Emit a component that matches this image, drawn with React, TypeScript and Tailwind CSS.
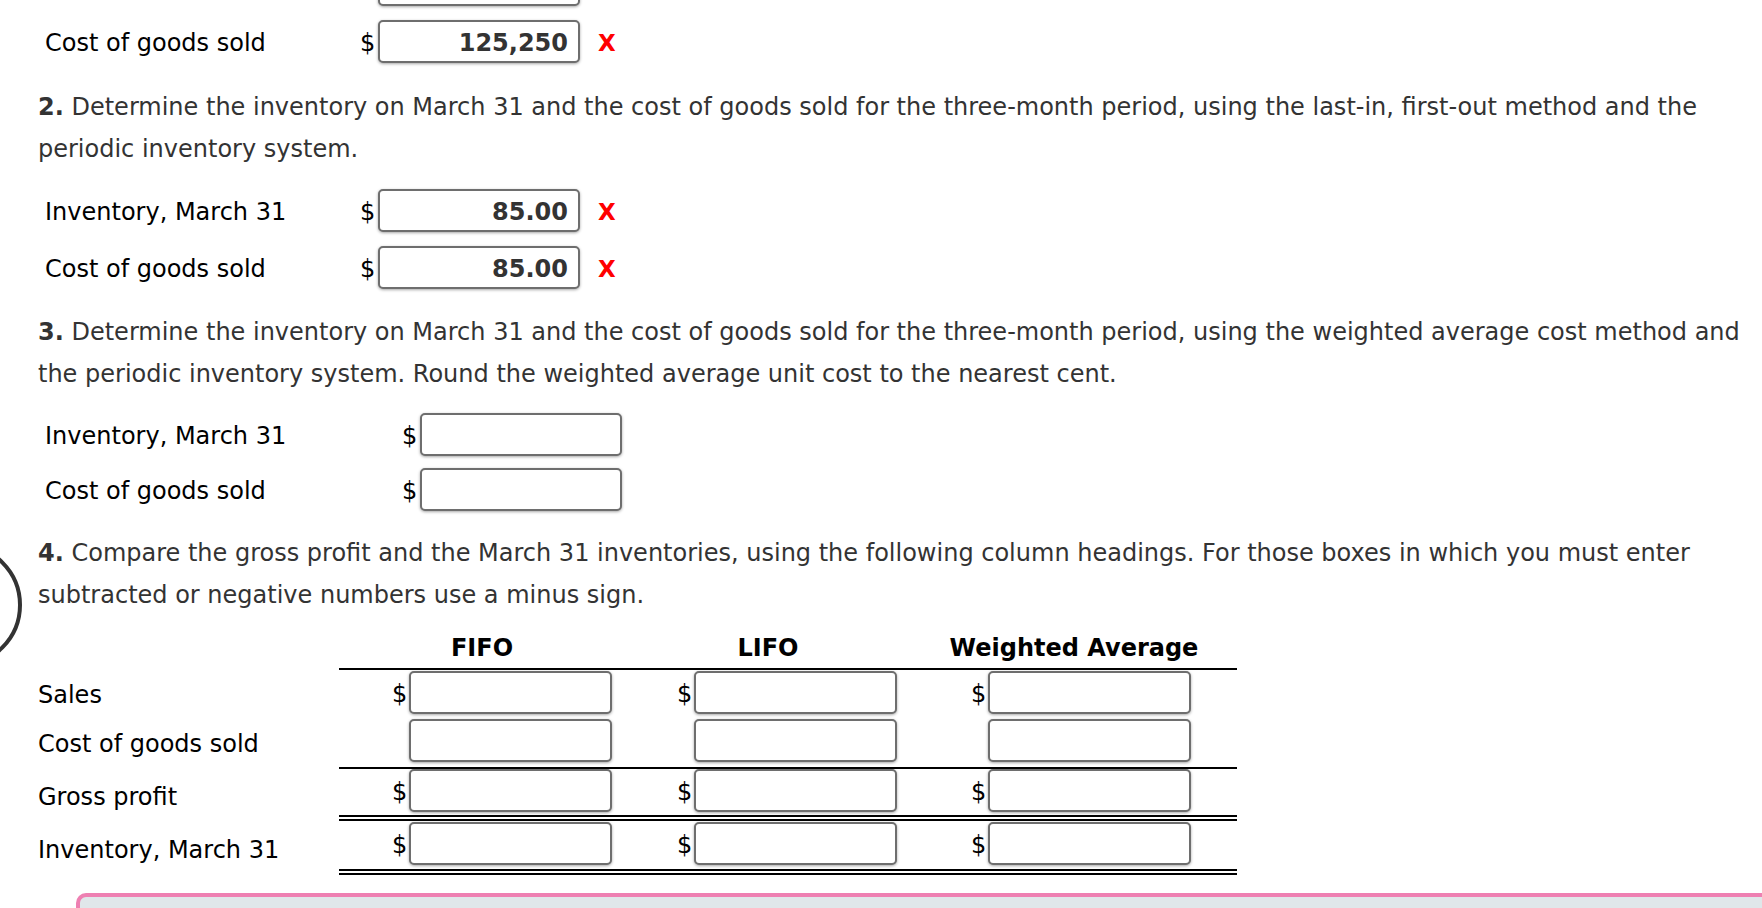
import React from 'react';

const font = { fontFamily: '"DejaVu Sans", Verdana, sans-serif' };

interface BoxProps {
  value?: string;
}

const AnswerBox = ({ value }: BoxProps) => (
  <div className="w-[202px] h-[43px] border-2 border-[#6e6e6e] rounded-[5px] bg-white shadow-[0_1px_3px_rgba(0,0,0,0.35)] flex items-center justify-end pr-[10px]">
    {value && <span className="text-[24px] font-bold text-[#333] pt-[2px]">{value}</span>}
  </div>
);

interface RowProps {
  label: string;
  value?: string;
  wrong?: boolean;
  labelWidth: string;
  className?: string;
}

const AnswerRow = ({ label, value, wrong, labelWidth, className }: RowProps) => (
  <div className={`flex items-center h-[43px] pl-[45px] ${className ?? ''}`}>
    <div className={`${labelWidth} text-[24px] text-black whitespace-nowrap pt-[3px]`}>{label}</div>
    <div className="w-[18px] text-[24px] text-black pt-[2px]">$</div>
    <AnswerBox value={value} />
    {wrong && <span className="ml-[18px] text-[23px] font-bold text-[#f00] pt-[3px]">X</span>}
  </div>
);

const Para = ({ num, lines, className }: { num: string; lines: string[]; className?: string }) => (
  <p className={`pl-[38px] text-[24px] leading-[42px] text-[#333] whitespace-nowrap ${className ?? ''}`}>
    <span className="font-bold">{num}</span>
    {lines.map((l, i) => (
      <React.Fragment key={i}>
        {i > 0 && <br />}
        {l}
      </React.Fragment>
    ))}
  </p>
);

const Cell = ({ dollar, width, pr }: { dollar: boolean; width: string; pr: string }) => (
  <div className={`${width} ${pr} flex justify-end items-start`}>
    <span className="w-[17px] text-[24px] text-black leading-[43px] pt-[2px]">{dollar ? '$' : ''}</span>
    <div className="w-[203px] h-[43px] border-2 border-[#6e6e6e] rounded-[5px] bg-white shadow-[0_1px_3px_rgba(0,0,0,0.35)]" />
  </div>
);

const TableRow = ({ label, dollar, rowClass }: { label: string; dollar: boolean; rowClass: string }) => (
  <div className="flex">
    <div className="w-[339px] pl-[38px] pt-[3px] text-[24px] text-black flex items-center whitespace-nowrap">{label}</div>
    <div className={`w-[898px] flex ${rowClass}`}>
      <Cell dollar={dollar} width="w-[286px]" pr="pr-[13px]" />
      <Cell dollar={dollar} width="w-[286px]" pr="pr-[14px]" />
      <Cell dollar={dollar} width="w-[326px]" pr="pr-[46px]" />
    </div>
  </div>
);

export default function App() {
  return (
    <div className="relative w-full h-[908px] overflow-hidden bg-white" style={font}>
      <div className="absolute left-[-102px] top-[543px] w-[124px] h-[124px] rounded-full border-4 border-[#333]" />

      <div className="mt-[-37px]">
        <AnswerRow label="Inventory, March 31" labelWidth="w-[315px]" />
        <AnswerRow label="Cost of goods sold" value="125,250" wrong labelWidth="w-[315px]" className="mt-[14px]" />
      </div>

      <Para
        num="2."
        className="mt-[23px]"
        lines={[
          ' Determine the inventory on March 31 and the cost of goods sold for the three-month period, using the last-in, first-out method and the',
          'periodic inventory system.',
        ]}
      />

      <div className="mt-[19px]">
        <AnswerRow label="Inventory, March 31" value="85.00" wrong labelWidth="w-[315px]" />
        <AnswerRow label="Cost of goods sold" value="85.00" wrong labelWidth="w-[315px]" className="mt-[14px]" />
      </div>

      <Para
        num="3."
        className="mt-[22px]"
        lines={[
          ' Determine the inventory on March 31 and the cost of goods sold for the three-month period, using the weighted average cost method and',
          'the periodic inventory system. Round the weighted average unit cost to the nearest cent.',
        ]}
      />

      <div className="mt-[18px]">
        <AnswerRow label="Inventory, March 31" labelWidth="w-[357px]" />
        <AnswerRow label="Cost of goods sold" labelWidth="w-[357px]" className="mt-[12px]" />
      </div>

      <Para
        num="4."
        className="mt-[21px]"
        lines={[
          ' Compare the gross profit and the March 31 inventories, using the following column headings. For those boxes in which you must enter',
          'subtracted or negative numbers use a minus sign.',
        ]}
      />

      <div>
        <div className="flex">
          <div className="w-[339px]" />
          <div className="w-[898px] flex h-[54px] items-end border-b-2 border-black text-[24px] font-bold text-black leading-[28px]">
            <div className="w-[286px] text-center pb-[6px]">FIFO</div>
            <div className="w-[286px] text-center pb-[6px]">LIFO</div>
            <div className="w-[326px] text-center pb-[6px] whitespace-nowrap">Weighted Average</div>
          </div>
        </div>
        <TableRow label="Sales" dollar rowClass="h-[46px] pt-[1px]" />
        <TableRow label="Cost of goods sold" dollar={false} rowClass="h-[53px] pt-[3px] border-b-2 border-black" />
        <TableRow label="Gross profit" dollar rowClass="h-[52px] border-b-[6px] border-double border-black" />
        <TableRow label="Inventory, March 31" dollar rowClass="h-[54px] pt-[1px] border-b-[6px] border-double border-black" />
      </div>

      <div className="mt-[18px] ml-[76px] w-[1800px] h-[120px] rounded-tl-[10px] border-t-4 border-l-4 border-[#ee80b2] bg-[#e0e7ea]" />
    </div>
  );
}
